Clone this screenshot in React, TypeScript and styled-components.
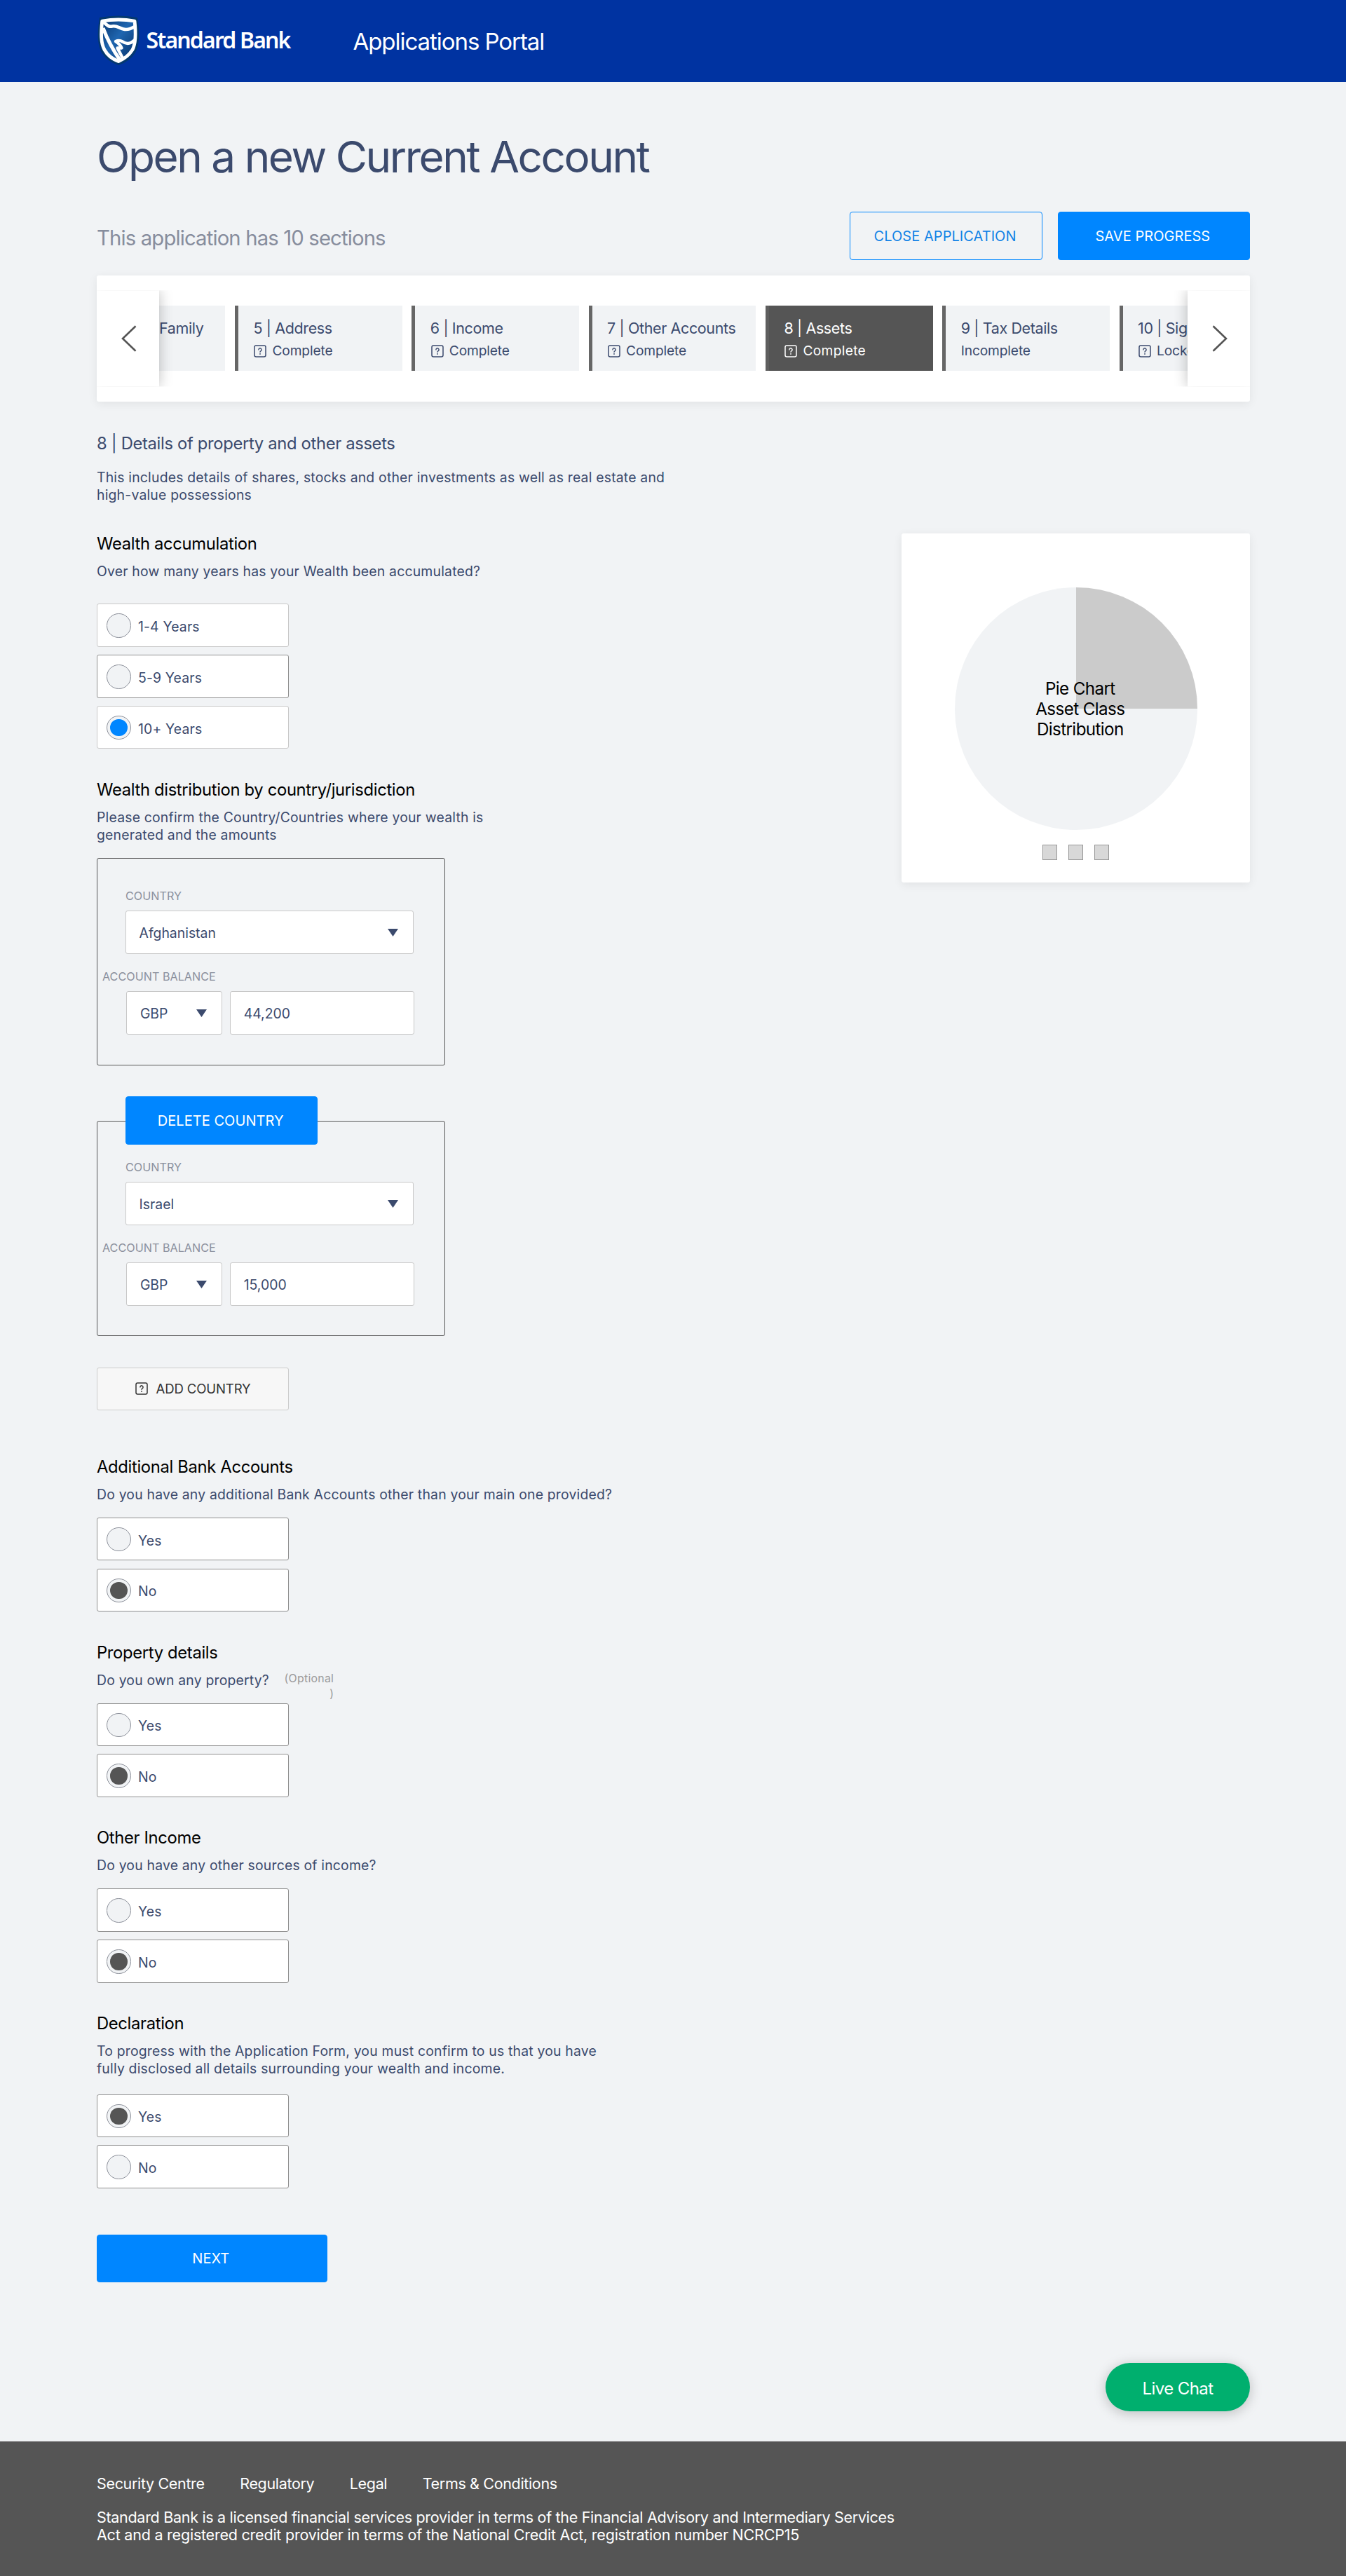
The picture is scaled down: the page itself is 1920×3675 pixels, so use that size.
import React from 'react';
import styled, { createGlobalStyle, css } from 'styled-components';

type Status = "Complete" | "Incomplete" | "Locked" | ""

const tabs: { title: string, status: Status, icon?: boolean, active?: boolean }[] = [
    { title: "5 | Address", status: "Complete", icon: true },
    { title: "6 | Income", status: "Complete", icon: true },
    { title: "7 | Other Accounts", status: "Complete", icon: true },
    { title: "8 | Assets", status: "Complete", icon: true, active: true },
    { title: "9 | Tax Details", status: "Incomplete" },
    { title: "10 | Sign", status: "Locked", icon: true },
]

const footerLinks = ["Security Centre", "Regulatory", "Legal", "Terms & Conditions"]

const PlaceholderIcon = () => (
    <svg width="18" height="18" viewBox="0 0 18 18" fill="none" stroke="currentColor" strokeLinecap="round">
        <rect x="1" y="1" width="16" height="16" rx="2.2" strokeWidth="1.5" />
        <path d="M6.9 6.9a2.1 2.1 0 1 1 3.3 1.7c-.8.5-1.2.8-1.2 1.7" strokeWidth="1.4" />
        <circle cx="9" cy="12.9" r=".95" fill="currentColor" stroke="none" />
    </svg>
)

const Caret = () => (
    <svg width="15" height="11" viewBox="0 0 15 11">
        <path d="M0 0h15L7.5 11z" fill="#3b4a6d" />
    </svg>
)

const Shield = () => (
    <svg width="60" height="72" viewBox="0 0 60 72" fill="none">
        <defs>
            <linearGradient id="flag" x1="0" y1="0" x2="1" y2="1">
                <stop offset="0" stopColor="#07356f" />
                <stop offset=".45" stopColor="#1f66b0" />
                <stop offset="1" stopColor="#062f66" />
            </linearGradient>
        </defs>
        <path d="M3 3Q30-2 57 3C60 22 61 40 54 53Q47 65 30 71Q13 65 6 53C-1 40 0 22 3 3z" fill="#04396f" />
        <path d="M6.700 8Q30 4 53 8C55 25 55 39 50 49Q43 60 30 65.500Q16 60 10 49C4.500 39 5 25 6.700 8z" fill="url(#flag)" stroke="#fff" strokeWidth="4.800" strokeLinejoin="round" />
        <path d="M8 9C12 12 15 17 21 15.500S31 18 37 19.500S48 19 53 16" stroke="#fff" strokeWidth="4.600" />
        <path d="M8 18Q17 42 33 65" stroke="#fff" strokeWidth="5" />
        <path d="M53 35C47 41 41 41 36 37.500Q31 34.500 26 37Q33 42 34.500 46.500H28.500L36.500 62" stroke="#fff" strokeWidth="4.400" strokeLinejoin="round" />
    </svg>
)

const Radio = ({ label, selected, dot = "#555", soft }: { label: string, selected?: boolean, dot?: string, soft?: boolean }) => (
    <RadioBox $soft={soft}>
        <Circle>{selected ? <Dot $color={dot} /> : null}</Circle>
        <span>{label}</span>
    </RadioBox>
)

const YesNo = ({ value }: { value: "Yes" | "No" }) => (
    <>
        <Radio label="Yes" selected={value === "Yes"} />
        <Radio label="No" selected={value === "No"} />
    </>
)

const Country = ({ name, amount, removable }: { name: string, amount: string, removable?: boolean }) => (
    <CountryBox $removable={removable}>
        {removable ? <DeleteButton>DELETE COUNTRY</DeleteButton> : null}
        <Label>COUNTRY</Label>
        <Field $width={410.6}>{name}<Caret /></Field>
        <Label $outdent>ACCOUNT BALANCE</Label>
        <BalanceRow>
            <Field $width={136.6}>GBP<Caret /></Field>
            <Field $width={262.8}>{amount}</Field>
        </BalanceRow>
    </CountryBox>
)

export default function App() {
    return (
        <Page>
            <GlobalStyle />
            <Header>
                <Shield />
                <Brand>Standard Bank</Brand>
                <PortalName>Applications Portal</PortalName>
            </Header>
            <Main>
                <Title>Open a new Current Account</Title>
                <Toolbar>
                    <Subtitle>This application has 10 sections</Subtitle>
                    <Button $outline>CLOSE APPLICATION</Button>
                    <Button>SAVE PROGRESS</Button>
                </Toolbar>
                <Stepper>
                    <ArrowPane $side="left">
                        <svg width="22" height="38" viewBox="0 0 22 38" fill="none" stroke="#555" strokeWidth="2.6">
                            <path d="M20.5 1.2L2 19l18.5 17.8" />
                        </svg>
                    </ArrowPane>
                    <Track>
                        <CutTab><TabTitle>Family</TabTitle></CutTab>
                        {tabs.map(tab => (
                            <Tab key={tab.title} $active={tab.active}>
                                <TabTitle>{tab.title}</TabTitle>
                                <TabStatus $active={tab.active}>
                                    {tab.icon ? <PlaceholderIcon /> : null}
                                    {tab.status}
                                </TabStatus>
                            </Tab>
                        ))}
                    </Track>
                    <ArrowPane $side="right">
                        <svg width="22" height="38" viewBox="0 0 22 38" fill="none" stroke="#555" strokeWidth="2.6">
                            <path d="M1.5 1.2L20 19L1.5 36.8" />
                        </svg>
                    </ArrowPane>
                </Stepper>
                <SectionTitle>8 | Details of property and other assets</SectionTitle>
                <Intro>
                    This includes details of shares, stocks and other investments as well as real estate and<br />
                    high-value possessions
                </Intro>
                <Columns>
                    <Form>
                        <Heading>Wealth accumulation</Heading>
                        <Text>Over how many years has your Wealth been accumulated?</Text>
                        <Options $top={34.2}>
                            <Radio label="1-4 Years" soft />
                            <Radio label="5-9 Years" />
                            <Radio label="10+ Years" soft selected dot="#0086ff" />
                        </Options>
                        <Heading>Wealth distribution by country/jurisdiction</Heading>
                        <Text>
                            Please confirm the Country/Countries where your wealth is<br />
                            generated and the amounts
                        </Text>
                        <Country name="Afghanistan" amount="44,200" />
                        <Country name="Israel" amount="15,000" removable />
                        <AddButton><PlaceholderIcon />ADD COUNTRY</AddButton>
                        <Heading $top={65.8}>Additional Bank Accounts</Heading>
                        <Text>Do you have any additional Bank Accounts other than your main one provided?</Text>
                        <Options><YesNo value="No" /></Options>
                        <Heading>Property details</Heading>
                        <Text>
                            Do you own any property?
                            <Optional>(Optional<br />)</Optional>
                        </Text>
                        <Options><YesNo value="No" /></Options>
                        <Heading>Other Income</Heading>
                        <Text>Do you have any other sources of income?</Text>
                        <Options><YesNo value="No" /></Options>
                        <Heading>Declaration</Heading>
                        <Text>
                            To progress with the Application Form, you must confirm to us that you have<br />
                            fully disclosed all details surrounding your wealth and income.
                        </Text>
                        <Options $top={24}><YesNo value="Yes" /></Options>
                        <NextButton>NEXT</NextButton>
                    </Form>
                    <ChartCard>
                        <Pie>
                            <PieLabel>Pie Chart<br />Asset Class<br />Distribution</PieLabel>
                        </Pie>
                        <Legend><i /><i /><i /></Legend>
                    </ChartCard>
                </Columns>
                <LiveChat>Live Chat</LiveChat>
            </Main>
            <Footer>
                <Links>
                    {footerLinks.map(link => <span key={link}>{link}</span>)}
                </Links>
                <Legal>
                    <p>Standard Bank is a licensed financial services provider in terms of the Financial Advisory and Intermediary Services</p>
                    <p>Act and a registered credit provider in terms of the National Credit Act, registration number NCRCP15</p>
                </Legal>
            </Footer>
        </Page>
    )
}

const GlobalStyle = createGlobalStyle`
    * {
        box-sizing: border-box;
    }

    body {
        margin: 0;
        background: #f1f3f5;
    }

    svg {
        display: block;
        flex: none;
    }
`

const Page = styled.div`
    width: 1920px;
    height: 3675px;
    display: flex;
    flex-direction: column;
    font-family: Inter, "Liberation Sans", sans-serif;
    color: #3b4a6d;
    white-space: nowrap;
`

const Header = styled.header`
    height: 117px;
    flex: none;
    display: flex;
    align-items: center;
    padding: 0 0 2px 138.5px;
    background: #0033a1;
    color: #fff;
`

const Brand = styled.div`
    width: 305px;
    padding: 0 0 2px 10px;
    font: 600 32px/40px "Noto Sans", "Open Sans", sans-serif;
    letter-spacing: -1.85px;
`

const PortalName = styled.div`
    padding-top: 3px;
    font-size: 33px;
    line-height: 40px;
    letter-spacing: -1.05px;
`

const Main = styled.main`
    flex: 1;
    padding: 69px 137px 0 138px;
    display: flex;
    flex-direction: column;
`

const Title = styled.h1`
    margin: 0;
    font-size: 62px;
    font-weight: 400;
    line-height: 75px;
    letter-spacing: -2.45px;
`

const Toolbar = styled.div`
    display: flex;
    align-items: center;
    gap: 22px;
    height: 68.6px;
    margin-top: 41px;
`

const Subtitle = styled.div`
    flex: 1;
    padding-top: 6px;
    font-size: 29.3px;
    color: #878d9d;
    letter-spacing: -0.86px;
`

const Button = styled.button<{ $outline?: boolean }>`
    width: 274.3px;
    height: 68.6px;
    padding: 1px 3px 0 0;
    border: 1px solid #0086ff;
    border-radius: 4px;
    background: ${p => p.$outline ? "transparent" : "#0086ff"};
    color: ${p => p.$outline ? "#1283e6" : "#fff"};
    font-family: inherit;
    font-size: 20px;
    letter-spacing: 0.05px;
`

const Stepper = styled.div`
    display: flex;
    align-items: center;
    height: 180.6px;
    margin-top: 22px;
    background: #fff;
    border-radius: 3px;
    box-shadow: 0 3px 14px rgba(0, 0, 0, 0.07);
`

const ArrowPane = styled.div<{ $side: "left" | "right" }>`
    position: relative;
    z-index: 1;
    flex: none;
    width: 89px;
    height: 137.4px;
    display: flex;
    align-items: center;
    background: #fff;
    box-shadow: 0 0 18px rgba(0, 0, 0, 0.25);
    ${p => p.$side === "left"
        ? css`padding-left: 34.5px; clip-path: inset(0 -20px 0 0);`
        : css`padding-left: 34.5px; clip-path: inset(0 0 0 -20px);`}
`

const Track = styled.div`
    flex: 1;
    min-width: 0;
    display: flex;
    gap: 13.7px;
    overflow: hidden;
`

const Tab = styled.div<{ $active?: boolean }>`
    flex: none;
    width: 238.64px;
    height: 93px;
    padding: 18px 0 0 21.5px;
    border-left: 5.5px solid ${p => p.$active ? "#5f5f5f" : "#666"};
    background: ${p => p.$active ? "#555" : "#f1f3f5"};
    color: ${p => p.$active ? "#fff" : "inherit"};
`

const CutTab = styled(Tab)`
    width: 94.3px;
    padding-left: 0;
    border-left: 0;
`

const TabTitle = styled.div`
    font-size: 21.5px;
    line-height: 28px;
    letter-spacing: -0.38px;
`

const TabStatus = styled.div<{ $active?: boolean }>`
    display: flex;
    align-items: center;
    gap: 8px;
    margin-top: 6px;
    font-size: 19.2px;
    line-height: 24px;
    letter-spacing: ${p => p.$active ? "0.3px" : "-0.15px"};

    svg {
        margin: 1px 0 0 1px;
    }
`

const SectionTitle = styled.h2`
    margin: 45px 0 0;
    font-size: 23.8px;
    font-weight: 400;
    line-height: 30px;
    letter-spacing: -0.34px;
`

const Text = styled.p`
    position: relative;
    margin: 12px 0 0;
    font-size: 19.4px;
    line-height: 24.7px;
    letter-spacing: 0.19px;
`

const Intro = styled(Text)`
    margin-top: 21px;
`

const Columns = styled.div`
    display: flex;
    justify-content: space-between;
    align-items: flex-start;
    margin-top: 42px;
`

const Form = styled.div`
    width: 800px;
`

const Heading = styled.h3<{ $top?: number }>`
    margin: ${p => p.$top ?? 43.6}px 0 0;
    color: #000;
    font-size: 23.8px;
    font-weight: 400;
    line-height: 30px;
    letter-spacing: -0.34px;

    &:first-child {
        margin-top: 0;
    }
`

const Options = styled.div<{ $top?: number }>`
    display: flex;
    flex-direction: column;
    gap: 11.2px;
    margin-top: ${p => p.$top ?? 20.3}px;
`

const RadioBox = styled.div<{ $soft?: boolean }>`
    display: flex;
    align-items: center;
    gap: 10.5px;
    width: 273.6px;
    height: 61.5px;
    padding: 0 0 0 13px;
    border: 1px solid ${p => p.$soft ? "#c8c8c8" : "#8f8f8f"};
    border-radius: 3px;
    background: #fff;
    font-size: 19.4px;
    letter-spacing: 0.15px;

    span {
        padding-top: 4px;
    }
`

const Circle = styled.div`
    width: 34.5px;
    height: 34.5px;
    padding: 4px;
    margin-top: 1px;
    border: 1px solid #8b8f99;
    border-radius: 50%;
    background: #f1f3f5;
`

const Dot = styled.div<{ $color: string }>`
    width: 100%;
    height: 100%;
    border-radius: 50%;
    background: ${p => p.$color};
`

const CountryBox = styled.div<{ $removable?: boolean }>`
    position: relative;
    width: 497.4px;
    height: ${p => p.$removable ? 307.4 : 296}px;
    margin-top: ${p => p.$removable ? 78.6 : 20.8}px;
    padding: ${p => p.$removable ? 55 : 42.9}px 0 0 40px;
    border: 1px solid #555;
    border-radius: 3px;
`

const DeleteButton = styled(Button)`
    position: absolute;
    top: -35.6px;
    left: 40px;
`

const Label = styled.div<{ $outdent?: boolean }>`
    margin: ${p => p.$outdent ? "22.4px 0 0 -33px" : "0"};
    color: #8b909d;
    font-size: 16.2px;
    line-height: 20px;
`

const Field = styled.div<{ $width: number }>`
    display: flex;
    align-items: center;
    justify-content: space-between;
    width: ${p => p.$width}px;
    height: 61.6px;
    margin-top: 11.2px;
    padding: 2px 21px 0 18.5px;
    border: 1px solid #c8c8c8;
    border-radius: 3px;
    background: #fff;
    font-size: 19.4px;

    svg {
        margin-top: -1px;
    }
`

const BalanceRow = styled.div`
    display: flex;
    gap: 11.2px;
    margin-left: 1.4px;
`

const AddButton = styled.button`
    display: flex;
    align-items: center;
    gap: 12px;
    width: 273.6px;
    height: 61.4px;
    margin-top: 44.6px;
    padding: 0 0 0 53.5px;
    border: 1px solid #ccc;
    border-radius: 3px;
    background: #f7f7f7;
    color: #333;
    font-family: inherit;
    font-size: 18.6px;
    letter-spacing: -0.15px;
`

const Optional = styled.span`
    position: absolute;
    top: -1px;
    left: 267.5px;
    color: #9b9b9b;
    font-size: 15.9px;
    line-height: 22px;
    letter-spacing: 0.25px;
    text-align: right;
`

const NextButton = styled(Button)`
    width: 328.6px;
    margin-top: 65.8px;
`

const ChartCard = styled.div`
    width: 497.5px;
    height: 498px;
    padding: 77.4px 0 0 76.5px;
    border-radius: 3px;
    background: #fff;
    box-shadow: 0 3px 14px rgba(0, 0, 0, 0.07);
`

const Pie = styled.div`
    width: 345.6px;
    height: 345.6px;
    padding: 131px 0 0 12px;
    border-radius: 50%;
    background: conic-gradient(#cbcbcb 25%, #f1f3f5 0);
`

const PieLabel = styled.div`
    color: #000;
    font-size: 24.2px;
    line-height: 28.8px;
    letter-spacing: -0.6px;
    text-align: center;
`

const Legend = styled.div`
    display: flex;
    gap: 15.5px;
    margin: 21.5px 0 0 124.5px;

    i {
        width: 21.6px;
        height: 21.6px;
        border: 1px solid #979797;
        background: #d8d8d8;
    }
`

const LiveChat = styled.button`
    align-self: flex-end;
    width: 206px;
    height: 68.6px;
    margin-top: 115px;
    padding: 3px 0 0;
    border: 0;
    border-radius: 35px;
    background: #00af6e;
    box-shadow: 0 3px 18px rgba(0, 0, 0, 0.22);
    color: #fff;
    font-family: inherit;
    font-size: 24px;
    letter-spacing: -0.6px;
`

const Footer = styled.footer`
    flex: none;
    height: 192px;
    padding: 46px 137px 0 138px;
    background: #555;
    color: #fff;
    font-size: 21.5px;
`

const Links = styled.div`
    display: flex;
    gap: 50.5px;
    line-height: 28px;
    letter-spacing: -0.34px;
`

const Legal = styled.div`
    margin-top: 22px;
    line-height: 24.7px;
    letter-spacing: -0.3px;

    p {
        margin: 0;
    }

    p + p {
        letter-spacing: -0.22px;
    }
`
